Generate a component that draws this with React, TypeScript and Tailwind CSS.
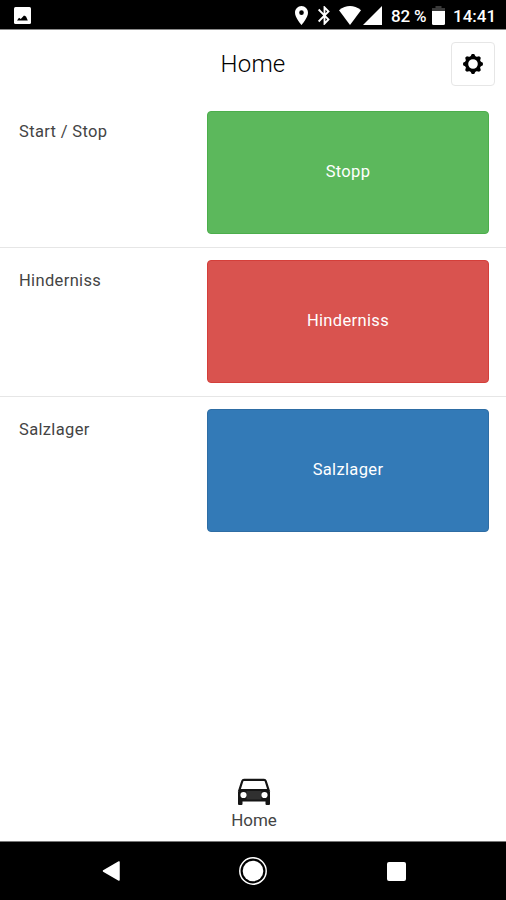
import React from "react";

function StatusBar() {
  return (
    <header className="flex h-[30px] items-start border-b border-[#8a8a8a] bg-black pl-[14px] pr-[10px] pt-[6px] text-white">
      <svg className="mt-px h-[17px] w-[17px]" viewBox="0 0 17 17">
        <rect width="17" height="17" rx="1.5" fill="#fff" />
        <path d="M3 13.500l2-2.800 1.800 1.200 3.200-3.300 2 1 1.800 3.900z" fill="#000" />
      </svg>
      <div className="ml-auto flex h-[19px] items-center">
        <svg className="h-[19px] w-[13px]" viewBox="5 2 14 20" preserveAspectRatio="none" fill="#fff">
          <path d="M12 2C8.13 2 5 5.13 5 9c0 5.25 7 13 7 13s7-7.75 7-13c0-3.87-3.13-7-7-7zm0 9.5a2.5 2.5 0 1 1 0-5 2.5 2.5 0 0 1 0 5z" />
        </svg>
        <svg className="ml-[10px] h-[19px] w-[13px]" viewBox="5 2 14 20" preserveAspectRatio="none" fill="#fff">
          <path d="M17.71 7.71L12 2h-1v7.59L6.41 5 5 6.41 10.59 12 5 17.59 6.41 19 11 14.41V22h1l5.71-5.71-4.3-4.29 4.3-4.29zM13 5.83l1.88 1.88L13 9.59V5.83zm1.88 10.46L13 18.17v-3.76l1.88 1.88z" />
        </svg>
        <svg className="ml-[8px] h-[19px] w-[22px]" viewBox="0 0 22 19" fill="#fff">
          <path d="M0 4.2Q11-4 22 4.2L11 19z" />
        </svg>
        <svg className="ml-[2px] h-[19px] w-[19px]" viewBox="0 0 19 19" fill="#fff">
          <path d="M19 0v19H0z" />
        </svg>
        <span className="ml-[9px] w-[37px] whitespace-nowrap pt-px text-[17px] font-medium leading-[19px] tracking-[-0.2px]">82 %</span>
        <svg className="ml-[4px] h-[19px] w-[13px]" viewBox="0 0 13 19">
          <path d="M3.5 0h6v2H13v3H0V2h3.5z" fill="#3a3a3a" />
          <path d="M0 5h13v12.5a1.5 1.5 0 0 1-1.5 1.5h-10A1.5 1.5 0 0 1 0 17.5z" fill="#fff" />
        </svg>
        <span className="ml-[8px] w-[43px] whitespace-nowrap pt-px text-[17px] font-medium leading-[19px]">14:41</span>
      </div>
    </header>
  );
}

function GearIcon() {
  return (
    <svg className="h-5 w-5" viewBox="-10 -10 20 20">
      <circle r="6.4" fill="none" stroke="#000" strokeWidth="3.2" />
      {[0, 45, 90, 135, 180, 225, 270, 315].map((a) => (
        <path key={a} d="M-2.800-7L-1.200-9.900H1.200L2.800-7z" fill="#000" transform={`rotate(${a})`} />
      ))}
    </svg>
  );
}

function CarIcon() {
  return (
    <svg className="h-[28px] w-[34px]" viewBox="0 0 34 28">
      <path d="M7 1.800H27Q28.300 1.800 28.700 3L31.700 12.500H2.300L5.300 3Q5.700 1.800 7 1.800z" fill="#fff" stroke="#151515" strokeWidth="2.200" />
      <path d="M3 11H31L33 14V26q0 1-1 1H29.500q-1 0-1-1V23.500H5.500V26q0 1-1 1H2q-1 0-1-1V14z" fill="#151515" />
      <path d="M9.500 13H24.500V21.500H9.500z" fill="#303030" />
      <circle cx="6.500" cy="17" r="3.100" fill="#fff" />
      <circle cx="27.500" cy="17" r="3.100" fill="#fff" />
    </svg>
  );
}

interface RowProps {
  label: string;
  action: string;
  tone: string;
  last?: boolean;
}

function Row({ label, action, tone, last }: RowProps) {
  return (
    <section
      className={`flex h-[149px] items-start justify-between pl-[19px] pr-[17px] pt-[12px] ${last ? "" : "border-b border-[#e6e6e6]"}`}
    >
      <span className="mt-[11px] text-[16.5px] leading-5 tracking-[0.35px] text-[#444]">{label}</span>
      <button className={`h-[123px] w-[282px] rounded-[4px] border pb-px text-[16.5px] tracking-[0.35px] text-white ${tone}`}>
        {action}
      </button>
    </section>
  );
}

export default function App() {
  return (
    <div className="flex h-[900px] w-[506px] flex-col bg-white font-[Roboto,sans-serif]">
      <StatusBar />
      <div className="grid h-[69px] grid-cols-[1fr_auto_1fr] items-center pb-px pr-[11px]">
        <span />
        <h1 className="ml-[11px] pb-px text-[24px] font-light leading-7 tracking-[0.2px] text-black">Home</h1>
        <button className="flex h-[44px] w-[44px] items-center justify-center justify-self-end rounded-[4px] border border-[#e6e6e6]">
          <GearIcon />
        </button>
      </div>
      <main className="flex-1">
        <Row label="Start / Stop" action="Stopp" tone="border-[#4cae4c] bg-[#5cb85c]" />
        <Row label="Hinderniss" action="Hinderniss" tone="border-[#d43f3a] bg-[#d9534f]" />
        <Row label="Salzlager" action="Salzlager" tone="border-[#2e6da4] bg-[#337ab7]" last />
      </main>
      <div className="flex h-[63px] flex-col items-center pl-[2px]">
        <CarIcon />
        <span className="mt-[4px] text-[17px] leading-5 text-[#444]">Home</span>
      </div>
      <nav className="flex h-[59px] items-center border-t border-[#777] bg-black pl-[102px]">
        <svg className="h-[22px] w-[18px]" viewBox="0 0 18 22">
          <path d="M17 2v18L1.500 11z" fill="#fff" stroke="#fff" strokeWidth="1.500" strokeLinejoin="round" />
        </svg>
        <svg className="ml-[119px] h-[28px] w-[28px]" viewBox="0 0 28 28">
          <circle cx="14" cy="14" r="13.200" fill="none" stroke="#fff" strokeWidth="1.500" />
          <circle cx="14" cy="14" r="10.300" fill="#fff" />
        </svg>
        <div className="ml-[120px] h-[19px] w-[19px] rounded-[2px] bg-white" />
      </nav>
    </div>
  );
}
